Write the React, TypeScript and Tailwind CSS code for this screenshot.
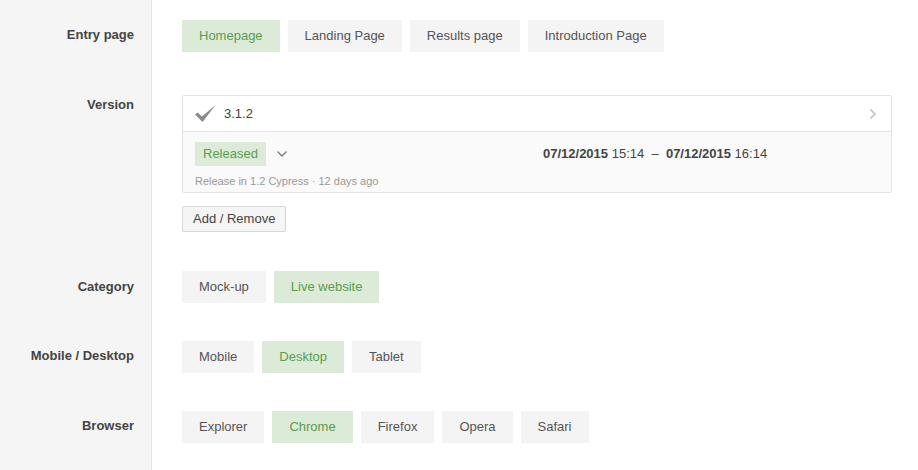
import React from "react";

type Opt = { label: string; active?: boolean };

function Pills({ items }: { items: Opt[] }) {
  return (
    <div className="flex gap-2">
      {items.map((it) => (
        <button
          key={it.label}
          className={
            it.active
              ? "h-[32px] px-[17px] bg-[#dcebd8] text-[#5a9d4e] text-[13px] leading-[16px] whitespace-nowrap"
              : "h-[32px] px-[17px] bg-[#f4f4f4] text-[#555555] text-[13px] leading-[16px] whitespace-nowrap"
          }
        >
          {it.label}
        </button>
      ))}
    </div>
  );
}

function Row({
  label,
  pt,
  labelPt,
  children,
}: {
  label: string;
  pt: string;
  labelPt: string;
  children: React.ReactNode;
}) {
  return (
    <div className="flex">
      <div
        className={`w-[152px] shrink-0 bg-[#f5f5f5] border-r border-[#e6e6e6] pr-[17px] text-right font-bold text-[13px] leading-[16px] text-[#444444] ${labelPt}`}
      >
        {label}
      </div>
      <div className={`flex-1 pl-[30px] pr-[26px] ${pt}`}>{children}</div>
    </div>
  );
}

export default function App() {
  return (
    <div className="flex flex-col w-[918px] min-h-[470px] bg-white font-['Liberation_Sans',Arial,sans-serif] text-[#444444]">
      <Row label="Entry page" pt="pt-[20px]" labelPt="pt-[27px]">
        <Pills
          items={[
            { label: "Homepage", active: true },
            { label: "Landing Page" },
            { label: "Results page" },
            { label: "Introduction Page" },
          ]}
        />
      </Row>

      <Row label="Version" pt="pt-[43px]" labelPt="pt-[45px]">
        <div className="border border-[#e3e3e3] rounded-[2px] bg-white">
          <div className="h-[36px] flex items-center pl-[12px] pr-[14px] border-b border-[#e3e3e3]">
            <svg width="21" height="17" viewBox="0 0 21 17" className="mr-[8px]">
              <path d="M0 9.5 L2.6 7.4 L7 11.6 L20.5 0 L7.6 17 Z" fill="#8a8a8a" />
            </svg>
            <span className="text-[13px] leading-[16px] text-[#444444]">3.1.2</span>
            <div className="flex-1" />
            <svg width="8" height="12" viewBox="0 0 8 12">
              <path d="M1.5 1.5 L6 6 L1.5 10.5" stroke="#cccccc" strokeWidth="2" fill="none" />
            </svg>
          </div>
          <div className="bg-[#fafafa] pl-[12px] pt-[10px] pb-[3px]">
            <div className="flex items-center">
              <div className="w-[348px] flex items-center">
                <span className="h-[24px] px-2 flex items-center bg-[#dcebd8] text-[#5a9d4e] text-[13px] leading-[16px]">
                  Released
                </span>
                <svg width="12" height="8" viewBox="0 0 12 8" className="ml-[10px]">
                  <path d="M1.5 1.5 L6 6 L10.5 1.5" stroke="#777777" strokeWidth="1.3" fill="none" />
                </svg>
              </div>
              <div className="text-[13px] leading-[16px] text-[#444444] whitespace-nowrap">
                <b>07/12/2015</b> 15:14 &nbsp;–&nbsp; <b>07/12/2015</b> 16:14
              </div>
            </div>
            <div className="mt-[7px] text-[11px] leading-[16px] text-[#999999]">
              Release in 1.2 Cypress · 12 days ago
            </div>
          </div>
        </div>
        <button className="mt-[13px] h-[26px] px-[10px] border border-[#d6d6d6] rounded-[2px] bg-[#f5f5f5] text-[13px] leading-[16px] text-[#444444]">
          Add / Remove
        </button>
      </Row>

      <Row label="Category" pt="pt-[39px]" labelPt="pt-[47px]">
        <Pills items={[{ label: "Mock-up" }, { label: "Live website", active: true }]} />
      </Row>

      <Row label="Mobile / Desktop" pt="pt-[38px]" labelPt="pt-[45px]">
        <Pills items={[{ label: "Mobile" }, { label: "Desktop", active: true }, { label: "Tablet" }]} />
      </Row>

      <Row label="Browser" pt="pt-[38px]" labelPt="pt-[45px]">
        <Pills
          items={[
            { label: "Explorer" },
            { label: "Chrome", active: true },
            { label: "Firefox" },
            { label: "Opera" },
            { label: "Safari" },
          ]}
        />
      </Row>

      <div className="flex flex-1">
        <div className="w-[152px] shrink-0 bg-[#f5f5f5] border-r border-[#e6e6e6]" />
      </div>
    </div>
  );
}
